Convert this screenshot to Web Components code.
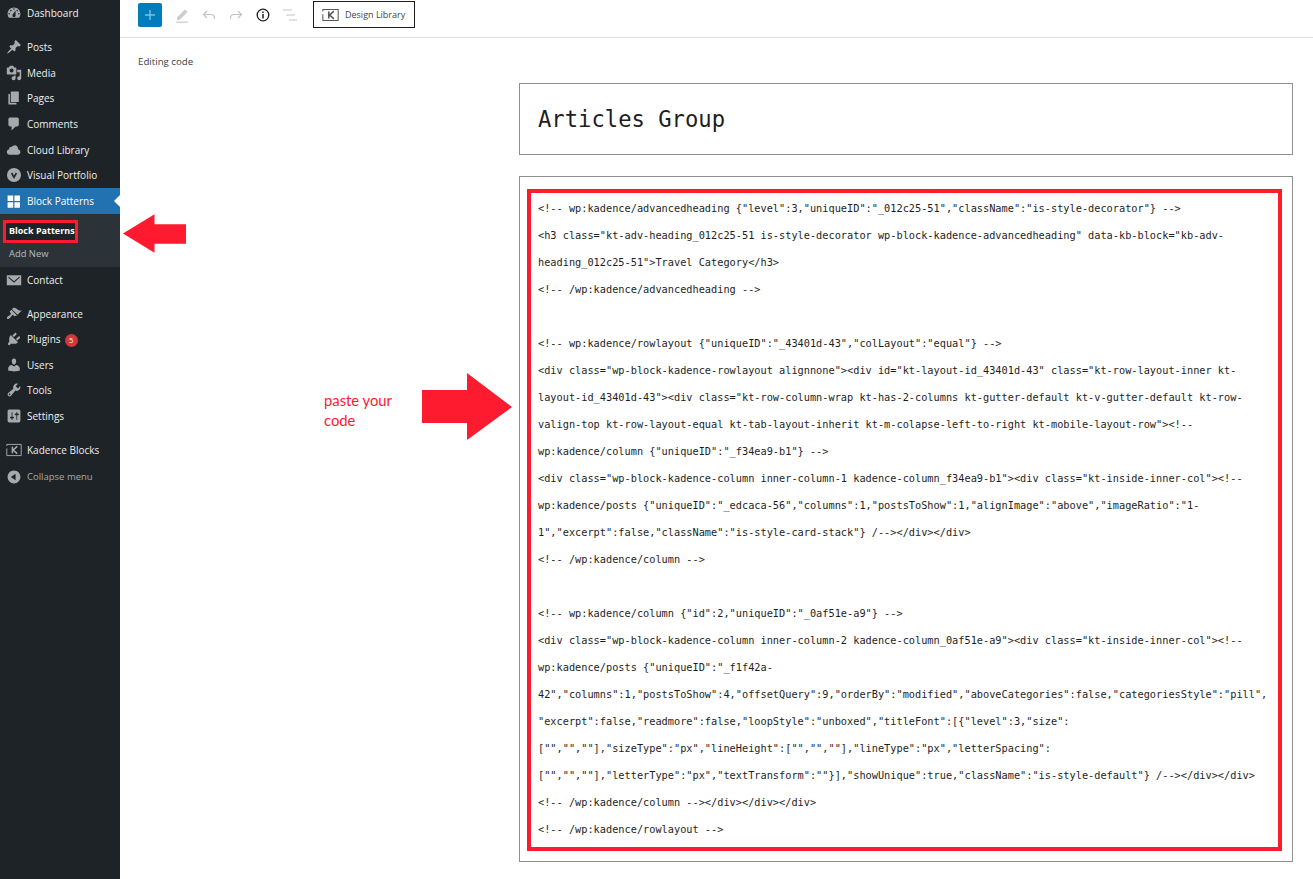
<!DOCTYPE html>
<html>
<head>
<meta charset="utf-8">
<title>Editing code</title>
<style>
  html, body { margin: 0; height: 879px; overflow: hidden; background: #fff; }
  body { font-family: "Open Sans", "Liberation Sans", sans-serif; }
</style>
</head>
<body>
<wp-admin>
  <wp-sidebar slot="sidebar">
    <menu-item icon="dashboard">Dashboard</menu-item>
    <menu-item icon="post" gap>Posts</menu-item>
    <menu-item icon="media">Media</menu-item>
    <menu-item icon="page">Pages</menu-item>
    <menu-item icon="comment">Comments</menu-item>
    <menu-item icon="cloud">Cloud Library</menu-item>
    <menu-item icon="vp">Visual Portfolio</menu-item>
    <menu-item icon="grid" current>Block Patterns</menu-item>
    <sub-menu>
      <sub-item marked>Block Patterns</sub-item>
      <sub-item>Add New</sub-item>
    </sub-menu>
    <menu-item icon="mail">Contact</menu-item>
    <menu-item icon="brush" gap>Appearance</menu-item>
    <menu-item icon="plugin" badge="5">Plugins</menu-item>
    <menu-item icon="user">Users</menu-item>
    <menu-item icon="tools">Tools</menu-item>
    <menu-item icon="settings">Settings</menu-item>
    <menu-item icon="kadence" gap>Kadence Blocks</menu-item>
    <menu-item icon="collapse" dim>Collapse menu</menu-item>
  </wp-sidebar>
  <editor-toolbar></editor-toolbar>
  <editor-body>
    <title-box>Articles Group</title-box>
    <code-box id="code"></code-box>
  </editor-body>
  <red-arrow dir="left" style="left:123px;top:214px;width:63px;height:39px"></red-arrow>
  <red-arrow dir="right" style="left:422px;top:373px;width:90px;height:67px"></red-arrow>
  <paste-note style="left:324px;top:390px">paste your<br>code</paste-note>
</wp-admin>

<script>
const ICONS = {
  dashboard: '<path fill-rule="evenodd" d="M3.76 16h12.48c1.1-1.37 1.76-3.11 1.76-5 0-4.42-3.58-8-8-8s-8 3.58-8 8c0 1.89.66 3.63 1.76 5zM10 4c.55 0 1 .45 1 1s-.45 1-1 1-1-.45-1-1 .45-1 1-1zM6 6c.55 0 1 .45 1 1s-.45 1-1 1-1-.45-1-1 .45-1 1-1zm8 0c.55 0 1 .45 1 1s-.45 1-1 1-1-.45-1-1 .45-1 1-1zm-5.37 5.55L12 7v6c0 1.1-.9 2-2 2s-2-.9-2-2c0-.57.24-1.08.63-1.45zM4 10c.55 0 1 .45 1 1s-.45 1-1 1-1-.45-1-1 .45-1 1-1zm12 0c.55 0 1 .45 1 1s-.45 1-1 1-1-.45-1-1 .45-1 1-1z"/>',
  post: '<path d="M10.44 3.02l1.82-1.82 6.36 6.35-1.83 1.82c-1.05-.68-2.48-.57-3.41.36l-.75.75c-.92.93-1.04 2.35-.35 3.41l-1.83 1.82-2.41-2.41-2.8 2.79c-.42.42-3.38 2.71-3.8 2.29s1.86-3.39 2.28-3.81l2.79-2.79L4.1 9.36l1.83-1.82c1.05.69 2.48.57 3.4-.36l.75-.75c.93-.92 1.05-2.35.36-3.41z"/>',
  media: '<path fill-rule="evenodd" d="M13 11V4c0-.55-.45-1-1-1h-1.67L9 1H5L3.67 3H2c-.55 0-1 .45-1 1v7c0 .55.45 1 1 1h10c.55 0 1-.45 1-1zM7 4.500c1.380 0 2.500 1.120 2.500 2.500S8.380 9.500 7 9.500 4.500 8.380 4.500 7 5.620 4.500 7 4.500zM14 6h5v10.500c0 1.380-1.120 2.500-2.500 2.500S14 17.880 14 16.500s1.120-2.500 2.500-2.500c.17 0 .34.02.5.05V9h-3V6zm-4 8.050V13h2v3.500c0 1.380-1.120 2.500-2.500 2.500S7 17.880 7 16.500 8.120 14 9.500 14c.17 0 .34.02.5.05z"/>',
  page: '<path d="M6 15V2h10v13H6zm-1 1h8v2H3V5h2v11z"/>',
  comment: '<path d="M5 2h9c1.100 0 2 .9 2 2v7c0 1.100-.9 2-2 2h-2l-5 5v-5H5c-1.100 0-2-.9-2-2V4c0-1.100.9-2 2-2z"/>',
  cloud: '<path d="M14.900 9c1.800.2 3.100 1.700 3.100 3.500 0 1.900-1.600 3.500-3.500 3.500h-10C2.600 16 1 14.400 1 12.500 1 10.700 2.300 9.300 4.100 9 4 8.900 4 8.700 4 8.500 4 7.100 5.100 6 6.500 6c.3 0 .7.1.9.2C8.100 4.900 9.400 4 11 4c2.200 0 4 1.800 4 4 0 .4-.1.7-.1 1z"/>',
  vp: '<circle cx="10" cy="10" r="8.800"/><path d="M7 7.500l3 5.500 3-5.500" fill="none" stroke="#1d2327" stroke-width="2"/>',
  grid: '<path fill="#fff" d="M2 3h7v7H2zM10.500 3h7v7h-7zM2 11.500h7v7H2zM10.500 11.500h7v7h-7z"/>',
  mail: '<path fill-rule="evenodd" d="M1 4h18v12.500H1zM3 5.500l7 6 7-6v1.800l-7 6-7-6z"/>',
  brush: '<path d="M14.480 11.060L7.410 3.990l1.500-1.500c.5-.56 2.300-.47 3.510.32 1.210.8 1.430 1.280 2.910 2.100 1.180.64 2.450 1.260 4.450.85zm-.71.71L6.700 4.700 4.930 6.470c-.39.39-.39 1.020 0 1.410l1.060 1.060c.39.39.39 1.030 0 1.420-.6.6-1.430 1.110-2.210 1.690-.35.26-.7.53-1.010.84C1.430 13.710.79 15.280 1.400 15.900c.79.79 2.360.15 3.710-1.210.3-.31.57-.66.84-1.010.58-.78 1.090-1.610 1.690-2.210.39-.39 1.020-.39 1.410 0l1.060 1.060c.39.39 1.020.39 1.410 0z"/>',
  plugin: '<path d="M13.110 4.360L9.870 7.600 8 5.730l3.240-3.240c.35-.34 1.050-.2 1.560.32.52.51.66 1.210.31 1.550zm-8 1.770l.91-1.120 9.010 9.010-1.190.84c-.71.71-2.630 1.160-3.820 1.160H6.140L4.900 17.260c-.59.59-1.540.59-2.120 0-.59-.58-.59-1.530 0-2.120l1.240-1.240v-3.880c0-1.130.4-3.190 1.090-3.890zm7.260 3.970l3.240-3.240c.34-.35 1.040-.21 1.550.31.52.51.66 1.210.31 1.550l-3.240 3.250z"/>',
  user: '<path d="M10 9.250c-2.270 0-2.730-3.440-2.730-3.440C7 4.020 7.820 2 9.970 2c2.160 0 2.980 2.020 2.710 3.810 0 0-.41 3.440-2.680 3.440zm0 2.570L12.720 10c2.390 0 4.520 2.330 4.520 4.530v2.490s-3.650 1.130-7.240 1.130c-3.650 0-7.240-1.130-7.240-1.130v-2.490c0-2.250 1.940-4.480 4.470-4.480z"/>',
  tools: '<path fill-rule="evenodd" d="M16.680 9.770c-1.340 1.340-3.300 1.670-4.950.99l-5.410 6.520c-.99.99-2.590.99-3.580 0s-.99-2.59 0-3.570l6.520-5.420c-.68-1.650-.35-3.610.99-4.950 1.280-1.280 3.120-1.620 4.720-1.060l-2.890 2.890 2.820 2.820 2.860-2.870c.53 1.580.18 3.390-1.080 4.650zM3.810 16.210c.4.39 1.040.39 1.430 0 .4-.4.4-1.040 0-1.430-.39-.4-1.030-.4-1.430 0-.39.39-.39 1.030 0 1.430z"/>',
  settings: '<path fill-rule="evenodd" d="M18 16V4c0-1.100-.9-2-2-2H4c-1.100 0-2 .9-2 2v12c0 1.100.9 2 2 2h12c1.100 0 2-.9 2-2zM8 11h1c.55 0 1 .45 1 1s-.45 1-1 1H8v1.500c0 .28-.22.5-.5.5s-.5-.22-.5-.5V13H6c-.55 0-1-.45-1-1s.45-1 1-1h1V5.500c0-.28.22-.5.5-.5s.5.22.5.5V11zm5-2h-1c-.55 0-1-.45-1-1s.45-1 1-1h1V5.500c0-.28.22-.5.5-.5s.5.22.5.5V7h1c.55 0 1 .45 1 1s-.45 1-1 1h-1v5.500c0 .28-.22.5-.5.5s-.5-.22-.5-.5V9z"/>',
  kadence: '<g fill="none" stroke="currentColor"><path stroke-width="1.200" d="M1 5V3h18v14H1V8"/><path stroke-width="1.900" d="M8 6v8M14 5.500L9 10l5 4.500"/></g>',
  collapse: '<path fill-rule="evenodd" d="M18 10c0-4.420-3.580-8-8-8s-8 3.580-8 8 3.580 8 8 8 8-3.580 8-8zm-6-4v8l-6-4z"/>'
};

function shadow(el, html) {
  el.attachShadow({ mode: 'open' }).innerHTML = html;
}

class WpAdmin extends HTMLElement {
  constructor() {
    super();
    shadow(this, `
      <style>
        :host { display: grid; grid-template-columns: 120px minmax(0, 1fr); grid-template-rows: 38px 1fr; height: 879px; position: relative; }
        ::slotted([slot=sidebar]) { grid-row: 1 / 3; }
      </style>
      <slot name="sidebar"></slot>
      <slot></slot>`);
  }
}

class WpSidebar extends HTMLElement {
  constructor() {
    super();
    shadow(this, `
      <style>:host { display: block; background: #1d2327; height: 879px; box-sizing: border-box; padding-top: .4px; }</style>
      <slot></slot>`);
  }
}

class MenuItem extends HTMLElement {
  constructor() {
    super();
    const current = this.hasAttribute('current');
    const dim = this.hasAttribute('dim');
    const badge = this.getAttribute('badge');
    shadow(this, `
      <style>
        :host { display: flex; align-items: center; height: 25.6px; position: relative; font-size: ${dim ? '9.500px' : '10px'}; color: ${dim ? '#a7aaad' : '#f0f0f1'}; }
        :host([gap]) { margin-top: 8.4px; }
        :host([dim]) { margin-top: 1px; }
        :host([current]) { background: #2271b1; color: #fff; }
        svg { width: 16px; height: 16px; margin-left: 5.500px; margin-right: 5.500px; fill: ${current ? '#fff' : '#a7aaad'}; color: #a7aaad; flex: none; }
        .badge { width: 13px; height: 13px; border-radius: 50%; background: #d63638; color: #fff; font-size: 7.500px; line-height: 13px; text-align: center; margin-left: 4px; margin-top: 2px; }
        .tip { position: absolute; right: 0; top: 7px; border: 6px solid transparent; border-left: 0; border-right-color: #fff; }
      </style>
      <svg viewBox="0 0 20 20">${ICONS[this.getAttribute('icon')]}</svg>
      <slot></slot>
      ${badge ? `<span class="badge">${badge}</span>` : ''}
      ${current ? '<span class="tip"></span>' : ''}`);
  }
}

class SubMenu extends HTMLElement {
  constructor() {
    super();
    shadow(this, `
      <style>:host { display: flex; flex-direction: column; background: #2c3338; height: 53.4px; padding-top: 6px; padding-left: 3px; box-sizing: border-box; }</style>
      <slot></slot>`);
  }
}

class SubItem extends HTMLElement {
  constructor() {
    super();
    shadow(this, `
      <style>
        :host { display: block; font-size: 9.400px; line-height: 17px; padding: 2px 6px 0; color: rgba(240,246,252,.7); }
        :host([marked]) { width: 75px; height: 23px; box-sizing: border-box; padding: 0 3px; line-height: 15px; border: 3px solid #fe1a2f; color: #fff; font-size: 9px; font-weight: 700; white-space: nowrap; background: #1d2327; }
      </style>
      <slot></slot>`);
  }
}

class EditorToolbar extends HTMLElement {
  constructor() {
    super();
    shadow(this, `
      <style>
        :host { display: flex; align-items: flex-start; height: 37px; border-bottom: 1px solid #e0e0e0; padding-left: 18px; font-size: 9px; color: #444; }
        .add { width: 24px; height: 24px; margin-top: 3px; background: #007cba; border-radius: 2px; display: flex; align-items: center; justify-content: center; }
        .tool { width: 16px; height: 16px; margin-top: 7px; flex: none; }
        .lib { display: flex; align-items: center; gap: 6px; height: 27px; width: 102px; box-sizing: border-box; margin: 1px 0 0 15px; border: 1px solid #1e1e1e; padding-left: 8px; white-space: nowrap; }
      </style>
      <div class="add"><svg width="12" height="12" viewBox="0 0 12 12"><path d="M6 1v10M1 6h10" stroke="#7fbfe0" stroke-width="1.400"/></svg></div>
      <svg class="tool" style="margin-left:12px" viewBox="0 0 16 16"><path d="M3 10.500L11 2.500l2.500 2.500-8 8H3zM2 14.500h12v1.200H2z" fill="#ccc"/></svg>
      <svg class="tool" style="margin-left:11px" viewBox="0 0 16 16" fill="none" stroke="#c4c4c4" stroke-width="1.200"><path d="M6 4L2.500 7.500 6 11M2.500 7.500H10c2 0 3.500 1.500 3.500 3.500v1"/></svg>
      <svg class="tool" style="margin-left:11px" viewBox="0 0 16 16" fill="none" stroke="#c4c4c4" stroke-width="1.200"><path d="M10 4l3.500 3.500L10 11M13.500 7.500H6c-2 0-3.500 1.500-3.500 3.500v1"/></svg>
      <svg class="tool" style="margin-left:11px" viewBox="0 0 16 16" fill="none" stroke="#1e1e1e"><circle cx="8" cy="8" r="5.800" stroke-width="1.300"/><path d="M8 7v4.500M8 4.500v1.500" stroke-width="1.500"/></svg>
      <svg class="tool" style="margin-left:11px" viewBox="0 0 16 16" stroke="#c4c4c4" stroke-width="1.100"><path d="M1 3h9M4 8h9M7 13h8"/></svg>
      <div class="lib">
        <svg width="17" height="14" viewBox="0 0 20 16" fill="none" stroke="#555"><path stroke-width="1.200" d="M1 4V1.500h18v13H1V7"/><path stroke-width="1.800" d="M8 4v8M14 3.500L9 8l5 4.500"/></svg>
        <span>Design Library</span>
      </div>`);
  }
}

class EditorBody extends HTMLElement {
  constructor() {
    super();
    shadow(this, `
      <style>
        :host { display: block; padding: 17px 20px 0 18px; }
        .caption { font-size: 9.700px; line-height: 14px; color: #3c434a; height: 28px; }
        .col { margin-left: 381px; display: flex; flex-direction: column; gap: 21px; }
      </style>
      <div class="caption">Editing code</div>
      <div class="col"><slot></slot></div>`);
  }
}

class TitleBox extends HTMLElement {
  constructor() {
    super();
    shadow(this, `
      <style>
        :host { display: block; height: 72px; box-sizing: border-box; border: 1px solid #8f8f8f; padding: 18px; font: 22.200px/35px "DejaVu Sans Mono", "Liberation Mono", monospace; color: #1e1e1e; }
      </style>
      <slot></slot>`);
  }
}

class CodeBox extends HTMLElement {
  constructor() {
    super();
    shadow(this, `
      <style>
        :host { display: block; height: 686px; box-sizing: border-box; border: 1px solid #8f8f8f; padding: 12px 10px 10px 7px; }
        .frame { height: 100%; box-sizing: border-box; border: 4px solid #fe1a2f; padding: 2px 0 0 7px; }
      </style>
      <div class="frame"><slot></slot></div>`);
  }
}

class CodeLine extends HTMLElement {
  constructor() {
    super();
    // no whitespace around the slot: the host is white-space: pre
    shadow(this, '<style>:host { display: block; height: 27px; font: 10.270px/27px "DejaVu Sans Mono", "Liberation Mono", monospace; color: #1e1e1e; white-space: pre; }</style><slot></slot>');
  }
}

class RedArrow extends HTMLElement {
  constructor() {
    super();
    const left = this.getAttribute('dir') === 'left';
    const pts = left
      ? '0,19.500 32,0 32,10 64,10 64,30 32,30 32,39'
      : '90,34 45,0 45,17 0,17 0,50 45,50 45,67';
    shadow(this, `
      <style>:host { display: block; position: absolute; } svg { display: block; width: 100%; height: 100%; }</style>
      <svg viewBox="${left ? '0 0 64 39' : '0 0 90 67'}"><polygon points="${pts}" fill="#fe1a2f"/></svg>`);
  }
}

class PasteNote extends HTMLElement {
  constructor() {
    super();
    shadow(this, `
      <style>:host { display: block; position: absolute; font: 14.800px/20px Lato, "Liberation Sans", sans-serif; color: #fe1a2f; }</style>
      <slot></slot>`);
  }
}

const classes = {
  'wp-admin': WpAdmin, 'wp-sidebar': WpSidebar, 'menu-item': MenuItem, 'sub-menu': SubMenu,
  'sub-item': SubItem, 'editor-toolbar': EditorToolbar, 'editor-body': EditorBody,
  'title-box': TitleBox, 'code-box': CodeBox, 'code-line': CodeLine,
  'red-arrow': RedArrow, 'paste-note': PasteNote
};
Object.keys(classes).forEach(name => customElements.define(name, classes[name]));

const codeLines = [
  '<!-- wp:kadence/advancedheading {"level":3,"uniqueID":"_012c25-51","className":"is-style-decorator"} -->',
  '<h3 class="kt-adv-heading_012c25-51 is-style-decorator wp-block-kadence-advancedheading" data-kb-block="kb-adv-',
  'heading_012c25-51">Travel Category</h3>',
  '<!-- /wp:kadence/advancedheading -->',
  '',
  '<!-- wp:kadence/rowlayout {"uniqueID":"_43401d-43","colLayout":"equal"} -->',
  '<div class="wp-block-kadence-rowlayout alignnone"><div id="kt-layout-id_43401d-43" class="kt-row-layout-inner kt-',
  'layout-id_43401d-43"><div class="kt-row-column-wrap kt-has-2-columns kt-gutter-default kt-v-gutter-default kt-row-',
  'valign-top kt-row-layout-equal kt-tab-layout-inherit kt-m-colapse-left-to-right kt-mobile-layout-row"><!--',
  'wp:kadence/column {"uniqueID":"_f34ea9-b1"} -->',
  '<div class="wp-block-kadence-column inner-column-1 kadence-column_f34ea9-b1"><div class="kt-inside-inner-col"><!--',
  'wp:kadence/posts {"uniqueID":"_edcaca-56","columns":1,"postsToShow":1,"alignImage":"above","imageRatio":"1-',
  '1","excerpt":false,"className":"is-style-card-stack"} /--></div></div>',
  '<!-- /wp:kadence/column -->',
  '',
  '<!-- wp:kadence/column {"id":2,"uniqueID":"_0af51e-a9"} -->',
  '<div class="wp-block-kadence-column inner-column-2 kadence-column_0af51e-a9"><div class="kt-inside-inner-col"><!--',
  'wp:kadence/posts {"uniqueID":"_f1f42a-',
  '42","columns":1,"postsToShow":4,"offsetQuery":9,"orderBy":"modified","aboveCategories":false,"categoriesStyle":"pill",',
  '"excerpt":false,"readmore":false,"loopStyle":"unboxed","titleFont":[{"level":3,"size":',
  '["","",""],"sizeType":"px","lineHeight":["","",""],"lineType":"px","letterSpacing":',
  '["","",""],"letterType":"px","textTransform":""}],"showUnique":true,"className":"is-style-default"} /--></div></div>',
  '<!-- /wp:kadence/column --></div></div></div>',
  '<!-- /wp:kadence/rowlayout -->'
];
const codeBox = document.getElementById('code');
codeLines.forEach(text => {
  const line = document.createElement('code-line');
  line.textContent = text;
  codeBox.appendChild(line);
});
</script>
</body>
</html>
